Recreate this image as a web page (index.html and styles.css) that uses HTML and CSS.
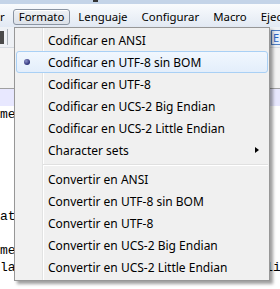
FILE: index.html
```html
<!DOCTYPE html>
<html lang="es">
<head>
    <meta charset="UTF-8">
    <title>Formato</title>
    <link rel="stylesheet" href="styles.css">
</head>
<body>
    <div class="screen">
        <div class="titlebar"><span class="title-mark"></span></div>
        <ul class="menubar">
            <li class="menubar-item menubar-item--cut">Ver</li>
            <li class="menubar-item is-open">Formato</li>
            <li class="menubar-item">Lenguaje</li>
            <li class="menubar-item">Configurar</li>
            <li class="menubar-item">Macro</li>
            <li class="menubar-item">Ejecutar</li>
        </ul>
        <div class="toolbar">
            <span class="tool-left"><span class="tool-icon"></span><span class="tool-sep"></span></span>
            <span class="tool-right">E</span>
        </div>
        <div class="tabbar"></div>
        <div class="editor">
            <div class="line current"></div>
            <div class="line">me</div>
            <div class="line"></div>
            <div class="line"></div>
            <div class="line"></div>
            <div class="line"></div>
            <div class="line"></div>
            <div class="line">at</div>
            <div class="line"></div>
            <div class="line">me</div>
            <div class="line">la codificación del archivo se explica</div>
        </div>

        <!-- menú desplegable de Formato -->
        <div class="dropdown">
            <div class="item"><span class="mark"></span>Codificar en ANSI</div>
            <div class="item selected"><span class="mark"><span class="bullet"></span></span>Codificar en UTF-8 sin BOM</div>
            <div class="item"><span class="mark"></span>Codificar en UTF-8</div>
            <div class="item"><span class="mark"></span>Codificar en UCS-2 Big Endian</div>
            <div class="item"><span class="mark"></span>Codificar en UCS-2 Little Endian</div>
            <div class="item"><span class="mark"></span>Character sets<span class="arrow"></span></div>
            <div class="separator"></div>
            <div class="item"><span class="mark"></span>Convertir en ANSI</div>
            <div class="item"><span class="mark"></span>Convertir en UTF-8 sin BOM</div>
            <div class="item"><span class="mark"></span>Convertir en UTF-8</div>
            <div class="item"><span class="mark"></span>Convertir en UCS-2 Big Endian</div>
            <div class="item"><span class="mark"></span>Convertir en UCS-2 Little Endian</div>
        </div>
    </div>
</body>
</html>
```

FILE: styles.css
```css
body {
    margin: 0;
    padding: 0;
    background: #fff;
    font-family: 'Noto Sans', 'Open Sans', sans-serif;
    font-size: 12px;
    color: #000;
}
.screen {
    position: relative;
    width: 280px;
    height: 289px;
    overflow: hidden;
    background: #fff;
}
.titlebar {
    height: 4px;
    background: #c4d4e8;
}
.title-mark {
    display: block;
    width: 5px;
    height: 2px;
    margin-left: 93px;
    background: #333;
}
.menubar {
    list-style: none;
    margin: 0;
    padding: 5px 0 2px 0;
    height: 16px;
    display: flex;
    background: linear-gradient(#f9fbfd, #e2e9f3);
    white-space: nowrap;
    font-size: 11.4px;
}
.menubar-item {
    height: 14px;
    line-height: 14px;
    padding: 0 5px;
    margin: 0 1px;
    border: 1px solid transparent;
    border-radius: 3px;
}
.menubar-item--cut {
    margin-left: -19px;
}
.menubar-item.is-open {
    border-color: #8a94a2;
    background: linear-gradient(#eef1f5, #dde2e9);
    box-shadow: inset 0 1px 0 #fff;
}
.toolbar {
    height: 20px;
    border-bottom: 1px solid #d6dbe2;
    background: #eef1f5;
    display: flex;
    justify-content: space-between;
    align-items: center;
}
.tool-left {
    display: flex;
    align-items: center;
    gap: 3px;
}
.tool-icon {
    width: 4px;
    height: 13px;
    background: #4a4a4a;
}
.tool-sep {
    width: 1px;
    height: 16px;
    background: #a9b0b8;
}
.tool-right {
    width: 8px;
    height: 13px;
    margin-right: -1px;
    border: 1px solid #4f7fc4;
    border-right: none;
    color: #2b64c1;
    font-size: 11px;
    line-height: 13px;
    padding-left: 1px;
    background: #e6eefa;
}
.tabbar {
    height: 40px;
    background: #f3f3f3;
    border-bottom: 1px solid #a0a0a0;
}
.editor {
    font-family: 'Liberation Mono', monospace;
    font-size: 13px;
}
.line {
    height: 17px;
    line-height: 17px;
    white-space: pre;
}
.line.current {
    background: #e8e8ff;
}
.dropdown {
    position: absolute;
    left: 14px;
    top: 27px;
    width: 254px;
    padding: 1px 0 2px 0;
    border: 1px solid #979797;
    background: linear-gradient(to right, #f1f1f1 0 27px, #e2e3e3 27px 28px, #fff 28px 29px, #f0f0f0 29px);
    box-shadow: 3px 3px 3px rgba(0, 0, 0, 0.38);
    white-space: nowrap;
}
.item {
    height: 20px;
    margin: 0 1px;
    padding-right: 8px;
    border: 1px solid transparent;
    border-radius: 3px;
    display: flex;
    align-items: center;
}
.item.selected {
    border-color: #a9d0f5;
    background: linear-gradient(#f1f7fe, #e3eefb);
}
.mark {
    width: 31px;
    flex: none;
    display: flex;
    align-items: center;
    padding-left: 7px;
    box-sizing: border-box;
}
.bullet {
    width: 6px;
    height: 6px;
    border-radius: 50%;
    background: radial-gradient(circle at 35% 35%, #8a90c8, #2c3178 70%);
}
.arrow {
    margin-left: auto;
    width: 0;
    height: 0;
    border-left: 4px solid #000;
    border-top: 3.5px solid transparent;
    border-bottom: 3.5px solid transparent;
}
.separator {
    height: 7px;
    margin-left: 28px;
    margin-right: 1px;
    background: linear-gradient(transparent 3px, #e0e0e0 3px 4px, #fff 4px 5px, transparent 5px);
}
```
